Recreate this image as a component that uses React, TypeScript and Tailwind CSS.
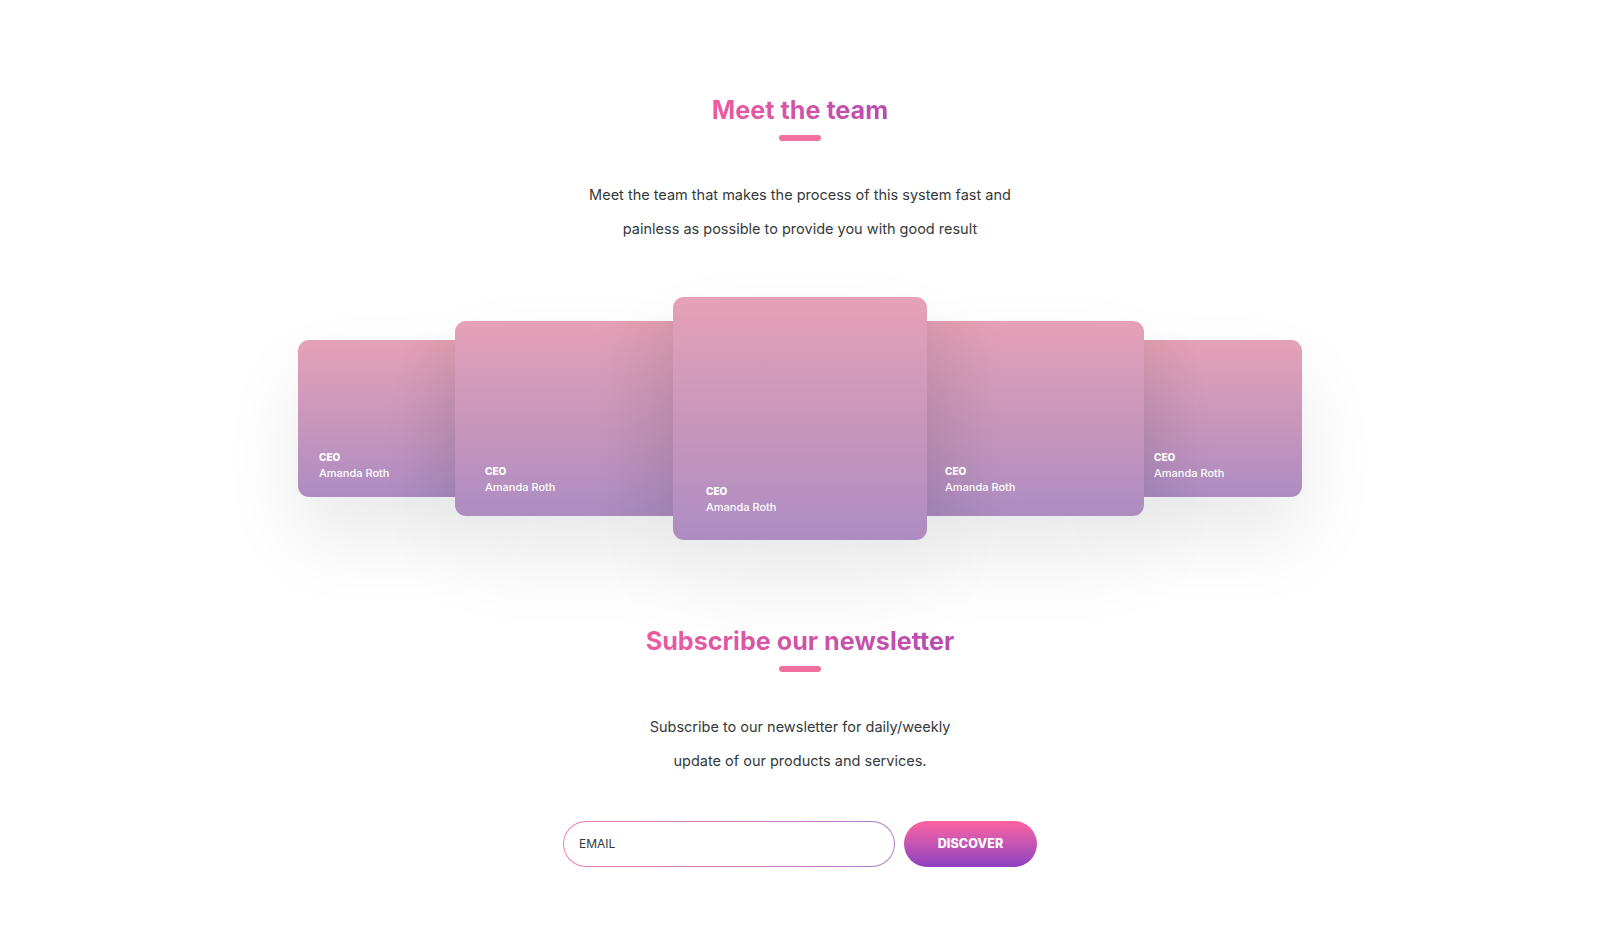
import React from "react";

const font = { fontFamily: "Inter, 'Noto Sans', sans-serif" };

function Card({
  w,
  h,
  z,
  ml,
  pad,
  pb,
  shade,
}: {
  w: string;
  h: string;
  z: string;
  ml: string;
  pad: string;
  pb: string;
  shade: "l" | "r" | "n";
}) {
  return (
    <div
      className={`relative shrink-0 overflow-hidden rounded-[11px] bg-linear-to-b from-[#e6a1b5] to-[#ad8cc2] shadow-[0_40px_80px_rgba(0,0,0,0.09)] ${w} ${h} ${z} ${ml}`}
    >
      {shade === "l" && (
        <div className="absolute inset-0 bg-linear-to-r from-transparent from-60% to-black/[0.045]" />
      )}
      {shade === "r" && (
        <div className="absolute inset-0 bg-linear-to-l from-transparent from-60% to-black/[0.045]" />
      )}
      <div className={`absolute left-0 bottom-0 ${pad} ${pb} text-white`}>
        <div className="text-[10px] font-extrabold leading-[16px]">CEO</div>
        <div className="text-[11px] leading-[17px] font-medium">Amanda Roth</div>
      </div>
    </div>
  );
}

export default function App() {
  return (
    <div className="min-h-[934px] w-full bg-white" style={font}>
      <div className="flex flex-col items-center pt-[94px] pb-[67px]">
        <h2 className="text-[25.2px] leading-[32px] font-bold bg-linear-to-r from-[#ee5b9e] to-[#b64cae] bg-clip-text text-transparent">
          Meet the team
        </h2>
        <div className="mt-[9px] h-[6px] w-[42px] rounded-full bg-[#f0719d]" />
        <p className="mt-[37px] text-center text-[14.5px] leading-[34px] text-[#343a3a]">
          Meet the team that makes the process of this system fast and
          <br />
          painless as possible to provide you with good result
        </p>

        <div className="mt-[51px] flex h-[243px] items-center justify-center">
          <Card w="w-[170px]" h="h-[157px]" z="z-0" ml="" pad="pl-[21px]" pb="pb-[15px]" shade="l" />
          <Card w="w-[229px]" h="h-[195px]" z="z-10" ml="-ml-[13px]" pad="pl-[30px]" pb="pb-[20px]" shade="l" />
          <Card w="w-[254px]" h="h-[243px]" z="z-20" ml="-ml-[11px]" pad="pl-[33px]" pb="pb-[24px]" shade="n" />
          <Card w="w-[229px]" h="h-[195px]" z="z-10" ml="-ml-[12px]" pad="pl-[30px]" pb="pb-[20px]" shade="r" />
          <Card w="w-[170px]" h="h-[157px]" z="z-0" ml="-ml-[12px]" pad="pl-[22px]" pb="pb-[15px]" shade="r" />
        </div>

        <h2 className="mt-[85px] text-[25.2px] leading-[32px] font-bold bg-linear-to-r from-[#ee5b9e] to-[#b64cae] bg-clip-text text-transparent">
          Subscribe our newsletter
        </h2>
        <div className="mt-[9px] h-[6px] w-[42px] rounded-full bg-[#f0719d]" />
        <p className="mt-[38px] text-center text-[14.5px] leading-[34px] text-[#343a3a]">
          Subscribe to our newsletter for daily/weekly
          <br />
          update of our products and services.
        </p>

        <div className="mt-[43px] flex items-center gap-[9px]">
          <div className="h-[46px] w-[332px] rounded-full bg-linear-to-r from-[#ee80b2] to-[#b07dc9] p-px">
            <div className="flex h-full w-full items-center rounded-full bg-white pl-[15px]">
              <span className="text-[12px] text-[#333a3a]">EMAIL</span>
            </div>
          </div>
          <button className="h-[46px] w-[133px] rounded-full bg-linear-to-b from-[#ff61a0] to-[#8e3fc1] text-[12.5px] font-extrabold text-white tracking-[0.1px]">
            DISCOVER
          </button>
        </div>
      </div>
    </div>
  );
}
